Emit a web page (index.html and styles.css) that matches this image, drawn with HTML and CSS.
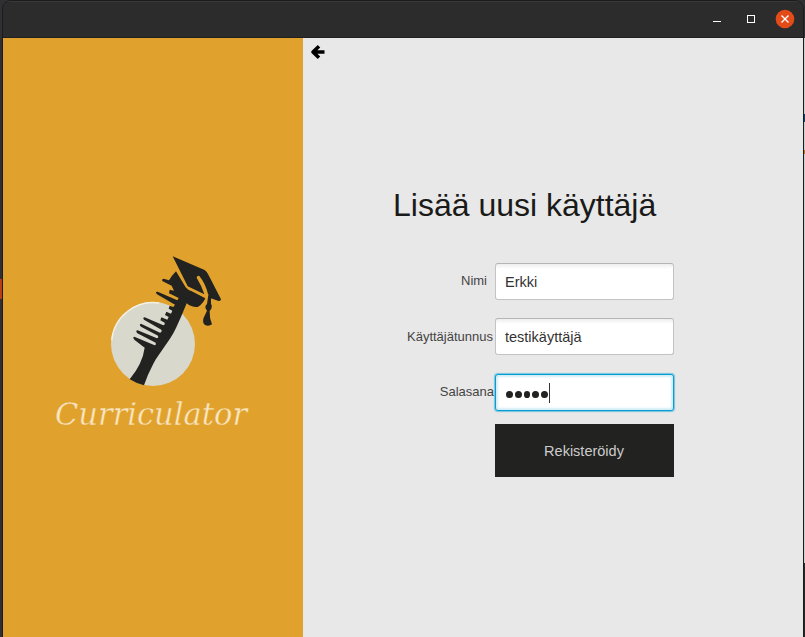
FILE: index.html
```html
<!DOCTYPE html>
<html lang="fi">
<head>
<meta charset="utf-8">
<title>Curriculator</title>
<link rel="stylesheet" href="styles.css">
</head>
<body>
<div class="window">
  <header class="titlebar">
    <svg class="controls" width="90" height="36" viewBox="0 0 90 36">
      <path d="M8 19.5h8" stroke="#fff" stroke-width="1"/>
      <rect x="42.5" y="13.5" width="7" height="7" fill="none" stroke="#fff"/>
      <circle cx="80" cy="17" r="9.3" fill="#e34b19"/>
      <path d="M76.5 13.5l7 7m0-7l-7 7" stroke="#fff" stroke-width="1.4"/>
    </svg>
  </header>
  <div class="content">
    <aside class="brand">
      <svg class="logo" width="130" height="150" viewBox="0 0 390 450">
        <circle cx="159" cy="297" r="126" fill="#d9d8cd"/>
        <path d="M35 286A125 125 0 0 1 178 174" fill="none" stroke="#f4f1e6" stroke-width="4"/>
        <g fill="#222221">
          <path d="M218 34L314 75Q320 79 324 87L363 163Q362 169 356 168L332 160L324 147Q316 115 298 93Q291 91 290 98Q306 124 313 148L263 124Z"/>
          <path d="M228 79L257 127Q263 135 274 138L316 160Q308 178 293 186Q276 188 260 175Q245 213 228 249C209 289 177 324 160 356Q143 388 132 421Q110 416 89 403Q128 355 134 308L103 284Q97 276 103 275L164 301Q170 299 167 293L112 265Q105 257 113 256L171 280Q177 278 174 272L123 245Q116 238 123 236L180 263Q187 261 184 254L132 224Q127 218 134 217L190 241Q196 239 194 233L181 226L184 217L202 224L206 216L195 210L199 200L213 206L217 197L206 191L209 182L220 186L225 179L171 148Q164 139 173 140L232 166L236 159L207 145L209 134L222 137L215 122L188 109Q183 103 191 101L207 106Q216 91 228 79Z"/>
          <path d="M325 150L333 153V176Q338 183 334 191L329 198Q328 220 336 238Q326 245 315 240Q306 232 311 218L321 197Q311 186 321 177Z"/>
        </g>
      </svg>
      <svg class="wordmark" width="210" height="50" viewBox="0 0 210 50">
        <text x="5" y="31" textLength="192" lengthAdjust="spacingAndGlyphs">Curriculator</text>
      </svg>
    </aside>
    <main class="main">
      <svg class="back" width="16" height="16" viewBox="0 0 16 16">
        <path d="M9 2.200L3 8l6 5.800M3 8h11.500" fill="none" stroke="#000" stroke-width="3.600" stroke-linejoin="round"/>
      </svg>
      <h1>Lisää uusi käyttäjä</h1>
      <form class="form">
        <label class="label name">Nimi</label><div class="field">Erkki</div>
        <label class="label user">Käyttäjätunnus</label><div class="field">testikäyttäjä</div>
        <label class="label pass">Salasana</label><div class="field focused"><span class="dots"><i></i><i></i><i></i><i></i><i></i></span><span class="caret"></span></div>
        <button class="submit" type="button">Rekisteröidy</button>
      </form>
    </main>
  </div>
</div>
</body>
</html>
```
FILE: styles.css
```css
* { box-sizing: border-box; }
body {
  margin: 0;
  height: 637px;
  overflow: hidden;
  font-family: "Liberation Sans", Arial, sans-serif;
  background:
    linear-gradient(#b93e14, #b93e14) 0 279px / 2px 20px no-repeat,
    linear-gradient(#303034 0 38px, #ccc 38px 114px, #123c68 114px 122px, #ccc 122px 150px, #b57720 150px 154px, #ccc 154px 563px, #252628 563px) 804px 0 / 1px 637px no-repeat,
    #303034;
}
.window {
  width: 802px;
  height: 637px;
  margin-left: 2px;
  border: 1px solid #1b1b1b;
  border-bottom: 0;
  border-radius: 9px 9px 0 0;
  overflow: hidden;
}
.titlebar {
  height: 37px;
  display: flex;
  justify-content: flex-end;
  background: #2c2c2c;
  border-top: 1px solid #383838;
  border-bottom: 1px solid #202020;
}
.controls { margin-right: 8px; }
.content { display: flex; height: 599px; }
.brand {
  width: 300px;
  background: #e0a22c;
  display: flex;
  flex-direction: column;
  padding-top: 207px;
}
.logo { margin-left: 97px; }
.wordmark { margin: -1px 0 0 47px; overflow: visible; }
.wordmark text {
  font: italic 32px "DejaVu Serif", serif;
  fill: #fae6c0;
  stroke: #e0a22c;
  stroke-width: .4px;
}
.main { flex: 1; background: #e8e8e8; }
.back { display: block; margin: 6px 0 0 7px; }
h1 {
  margin: 127px 0 0 90px;
  font-size: 32px;
  line-height: 36px;
  font-weight: 400;
  color: #1a1a19;
  white-space: nowrap;
}
.form {
  display: grid;
  grid-template-columns: 192px 179px;
  grid-template-rows: 37px 37px 37px 53px;
  row-gap: 18px;
  margin-top: 40px;
}
.label {
  text-align: right;
  font-size: 13px;
  line-height: 36px;
  padding-right: 2px;
  color: #444;
}
.name { padding-right: 8px; }
.user { padding-top: 1px; }
.pass { padding: 1px 1px 0 0; }
.field {
  display: flex;
  align-items: center;
  padding: 1px 9px 0;
  border: 1px solid #c3c3c3;
  border-top-color: #b5b5b5;
  border-radius: 3px;
  background: linear-gradient(#eee, #fff 5px);
  font-size: 14.5px;
  color: #333;
}
.focused {
  margin-top: 1px;
  height: 37px;
  border-color: #039ed3;
  background: #fff;
  box-shadow: 0 0 1px 1px #039ed380, inset 0 0 2px 2px #d5edf5;
}
.dots { display: flex; gap: 2px; margin: 2px 0 0 1px; }
.dots i { width: 6.8px; height: 7px; border-radius: 50%; background: #222221; }
.caret { width: 1px; height: 20px; margin-left: 1px; background: #333; }
.submit {
  grid-column: 2;
  margin-top: -4px;
  height: 53px;
  border: 0;
  padding: 1px 1px 0 0;
  background: #222221;
  color: #ccc;
  font: 14.5px "Liberation Sans", sans-serif;
}
```
